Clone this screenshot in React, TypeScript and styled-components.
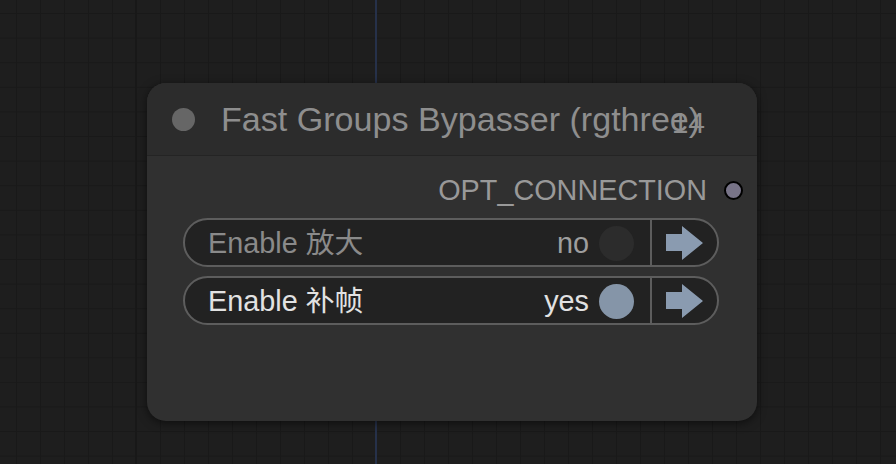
import React from "react";
import styled, { createGlobalStyle } from "styled-components";

const Global = createGlobalStyle`
  html, body { margin: 0; padding: 0; background: #1e1e1e; }
  body { font-family: "Liberation Sans", "Noto Sans CJK SC", Arial, sans-serif; }
`;

const Canvas = styled.div`
  position: relative;
  width: 896px;
  height: 464px;
  overflow: hidden;
  background-color: #1e1e1e;
  background-image:
    linear-gradient(to right, #191919 1px, transparent 1px),
    linear-gradient(to bottom, #191919 1px, transparent 1px);
  background-size: 24px 24.6px;
  background-position: 16px 13px;
`;

const MajorLine = styled.div`
  position: absolute;
  left: 135px;
  top: 0;
  width: 2px;
  height: 464px;
  background: #181818;
`;

const Link = styled.div`
  position: absolute;
  left: 375px;
  top: 0;
  width: 2px;
  height: 464px;
  background: #26314a;
`;

const Node = styled.div`
  position: absolute;
  left: 147px;
  top: 83px;
  width: 610px;
  height: 338px;
  border-radius: 19px;
  background: #303030;
  box-shadow: 0 2px 10px rgba(0, 0, 0, 0.55);
  display: flex;
  flex-direction: column;
  overflow: hidden;
`;

const Title = styled.div`
  position: relative;
  height: 73px;
  flex: none;
  display: flex;
  align-items: center;
  gap: 26px;
  padding-left: 25px;
  background: #2c2c2c;
  border-bottom: 1px solid #242424;
  box-sizing: border-box;
`;

const TitleDot = styled.div`
  width: 23px;
  height: 23px;
  border-radius: 50%;
  background: #666;
`;

const TitleText = styled.div`
  font-size: 34.1px;
  color: #8e8e8e;
  white-space: nowrap;
  line-height: 1;
  margin-top: 1px;
`;

const NodeId = styled.div`
  position: absolute;
  right: 52px;
  top: 50%;
  transform: translateY(-50%);
  margin-top: 4px;
  font-size: 30px;
  color: #8e8e8e;
  line-height: 1;
`;

const Body = styled.div`
  display: flex;
  flex-direction: column;
  padding: 10px 38px 0 36px;
`;

const OutputRow = styled.div`
  height: 48px;
  display: flex;
  align-items: center;
  justify-content: flex-end;
  gap: 17px;
  margin-right: -24px;
  margin-bottom: 4px;
`;

const OutputLabel = styled.div`
  font-size: 28.8px;
  color: #999;
  line-height: 1;
`;

const Slot = styled.div`
  width: 15px;
  height: 15px;
  border-radius: 50%;
  background: #787488;
  border: 2px solid #000;
`;

const Widget = styled.div`
  height: 49px;
  box-sizing: border-box;
  display: flex;
  border: 2px solid #5d5d5d;
  border-radius: 25px;
  background: #222;
  margin-bottom: 9px;
  overflow: hidden;
`;

const Toggle = styled.div`
  flex: 1;
  display: flex;
  align-items: center;
  padding: 1px 16px 0 23px;
  gap: 10px;
`;

const Label = styled.div<{ $on: boolean }>`
  flex: 1;
  font-size: 28.8px;
  color: ${(p) => (p.$on ? "#e2e2e2" : "#8a8a8a")};
  line-height: 1;
  white-space: nowrap;
`;

const Value = styled.div<{ $on: boolean }>`
  font-size: 28.8px;
  color: ${(p) => (p.$on ? "#e2e2e2" : "#9e9e9e")};
  line-height: 1;
`;

const Knob = styled.div<{ $on: boolean }>`
  width: 35px;
  height: 35px;
  border-radius: 50%;
  background: ${(p) => (p.$on ? "#8595a8" : "#2c2c2c")};
`;

const ArrowCell = styled.div`
  width: 64px;
  flex: none;
  border-left: 2px solid #5d5d5d;
  display: flex;
  align-items: center;
  justify-content: center;
  padding-right: 1px;
`;

const Arrow = () => (
  <svg width="37" height="34" viewBox="0 0 37 34">
    <path d="M0 8 H16 V0 L37 17 L16 34 V25 H0 Z" fill="#8a9bb0" />
  </svg>
);

const rows = [
  { label: "Enable 放大", on: false },
  { label: "Enable 补帧", on: true },
];

export default function App() {
  return (
    <>
      <Global />
      <Canvas>
        <MajorLine />
        <Link />
        <Node>
          <Title>
            <TitleDot />
            <TitleText>Fast Groups Bypasser (rgthree)</TitleText>
            <NodeId>14</NodeId>
          </Title>
          <Body>
            <OutputRow>
              <OutputLabel>OPT_CONNECTION</OutputLabel>
              <Slot />
            </OutputRow>
            {rows.map((r) => (
              <Widget key={r.label}>
                <Toggle>
                  <Label $on={r.on}>{r.label}</Label>
                  <Value $on={r.on}>{r.on ? "yes" : "no"}</Value>
                  <Knob $on={r.on} />
                </Toggle>
                <ArrowCell>
                  <Arrow />
                </ArrowCell>
              </Widget>
            ))}
          </Body>
        </Node>
      </Canvas>
    </>
  );
}
